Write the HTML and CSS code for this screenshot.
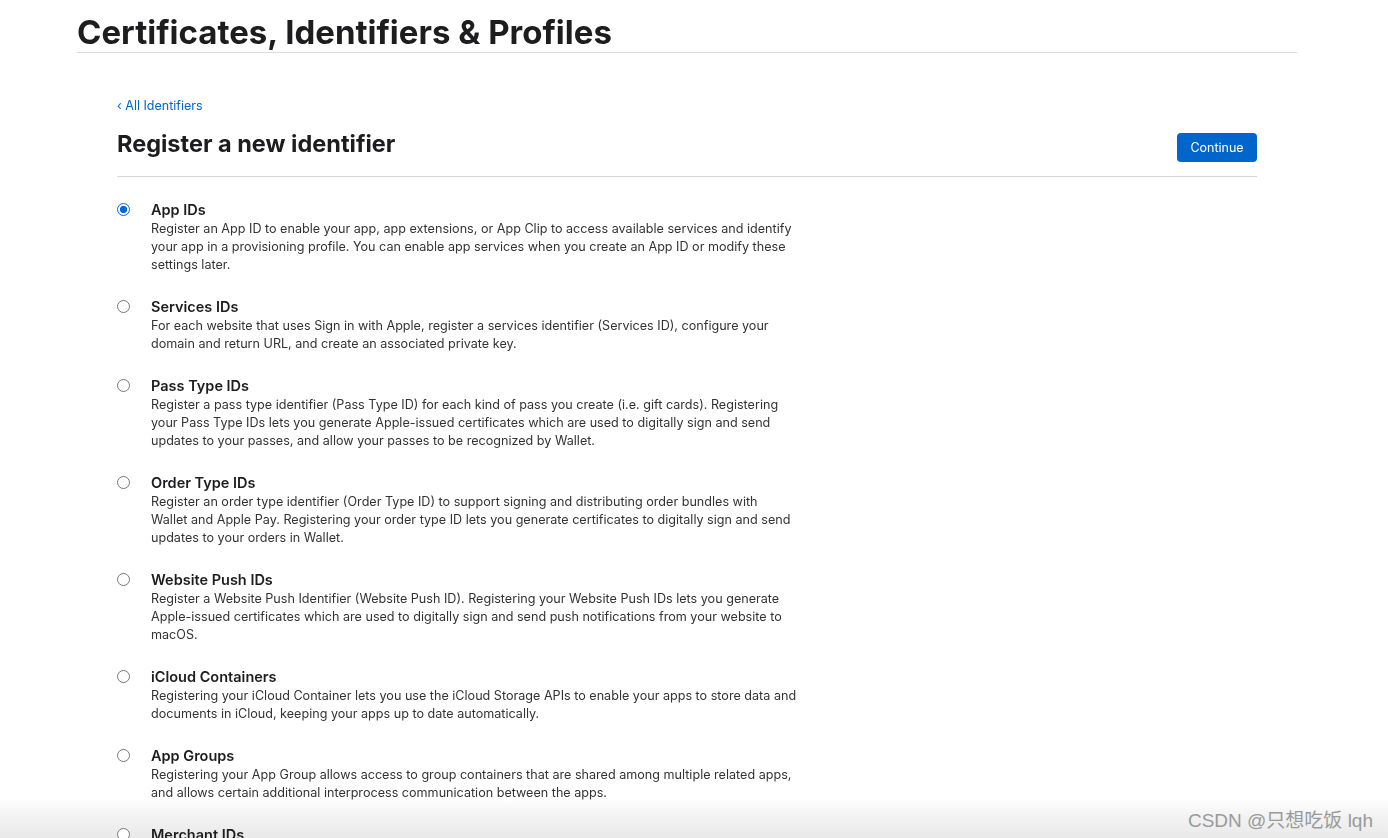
FILE: index.html
```html
<!DOCTYPE html>
<html lang="en">
<head>
    <meta charset="UTF-8">
    <meta name="viewport" content="width=device-width, initial-scale=1.0">
    <title>Register a new identifier</title>
    <link rel="stylesheet" href="styles.css">
</head>
<body>
    <header class="page-header">
        <h1 class="page-title">Certificates, Identifiers &amp; Profiles</h1>
    </header>

    <main class="content">
        <a class="back-link" href="#">&lsaquo; All Identifiers</a>
        <div class="section-head">
            <h2 class="section-title">Register a new identifier</h2>
            <button class="btn-continue">Continue</button>
        </div>

        <ul class="id-list">
            <li class="id-item">
                <span class="radio checked"></span>
                <div class="id-text">
                    <div class="id-name">App IDs</div>
                    <p class="id-desc">Register an App ID to enable your app, app extensions, or App Clip to access available services and identify your app in a provisioning profile. You can enable app services when you create an App ID or modify these settings later.</p>
                </div>
            </li>
            <li class="id-item">
                <span class="radio"></span>
                <div class="id-text">
                    <div class="id-name">Services IDs</div>
                    <p class="id-desc">For each website that uses Sign in with Apple, register a services identifier (Services ID), configure your domain and return URL, and create an associated private key.</p>
                </div>
            </li>
            <li class="id-item">
                <span class="radio"></span>
                <div class="id-text">
                    <div class="id-name">Pass Type IDs</div>
                    <p class="id-desc">Register a pass type identifier (Pass Type ID) for each kind of pass you create (i.e. gift cards). Registering your Pass Type IDs lets you generate Apple-issued certificates which are used to digitally sign and send updates to your passes, and allow your passes to be recognized by Wallet.</p>
                </div>
            </li>
            <li class="id-item">
                <span class="radio"></span>
                <div class="id-text">
                    <div class="id-name">Order Type IDs</div>
                    <p class="id-desc">Register an order type identifier (Order Type ID) to support signing and distributing order bundles with Wallet and Apple Pay. Registering your order type ID lets you generate certificates to digitally sign and send updates to your orders in Wallet.</p>
                </div>
            </li>
            <li class="id-item">
                <span class="radio"></span>
                <div class="id-text">
                    <div class="id-name">Website Push IDs</div>
                    <p class="id-desc">Register a Website Push Identifier (Website Push ID). Registering your Website Push IDs lets you generate Apple-issued certificates which are used to digitally sign and send push notifications from your website to macOS.</p>
                </div>
            </li>
            <li class="id-item">
                <span class="radio"></span>
                <div class="id-text">
                    <div class="id-name">iCloud Containers</div>
                    <p class="id-desc">Registering your iCloud Container lets you use the iCloud Storage APIs to enable your apps to store data and documents in iCloud, keeping your apps up to date automatically.</p>
                </div>
            </li>
            <li class="id-item">
                <span class="radio"></span>
                <div class="id-text">
                    <div class="id-name">App Groups</div>
                    <p class="id-desc">Registering your App Group allows access to group containers that are shared among multiple related apps, and allows certain additional interprocess communication between the apps.</p>
                </div>
            </li>
            <li class="id-item">
                <span class="radio"></span>
                <div class="id-text">
                    <div class="id-name">Merchant IDs</div>
                    <p class="id-desc">Register merchant identifiers to enable your apps to process Apple Pay payments.</p>
                </div>
            </li>
        </ul>
    </main>

    <div class="bottom-shade">
        <span class="watermark">CSDN @只想吃饭 lqh</span>
    </div>
</body>
</html>
```
FILE: styles.css
```css
/* Base */
body {
  margin: 0;
  background: #fff;
  color: #1d1d1f;
  font-family: Inter, "Noto Sans", sans-serif;
  overflow: hidden;
}

/* Page header */
.page-header {
  width: 1220px;
  margin-left: 77px;
  border-bottom: 1px solid #dcdcdc;
}

.page-title {
  margin: 0;
  padding-top: 13px;
  font-size: 33px;
  line-height: 39px;
  font-weight: 700;
  color: #1d1d1f;
}

/* Content */
.content {
  width: 1140px;
  margin-left: 117px;
  padding-top: 45px;
}

.back-link {
  display: block;
  font-size: 12.5px;
  line-height: 16px;
  color: #0066cc;
  text-decoration: none;
}

.section-head {
  display: flex;
  justify-content: space-between;
  align-items: flex-start;
  margin-top: 15px;
  padding-bottom: 14px;
  border-bottom: 1px solid #d6d6d6;
}

.section-title {
  margin: 0;
  font-size: 23.5px;
  line-height: 30px;
  font-weight: 700;
}

.btn-continue {
  width: 80px;
  height: 29px;
  margin-top: 4px;
  border: none;
  border-radius: 4px;
  background: #0066cc;
  color: #fff;
  font-family: inherit;
  font-size: 12.5px;
  cursor: pointer;
}

/* Identifier list */
.id-list {
  list-style: none;
  margin: 0;
  padding: 23px 0 0;
}

.id-item {
  display: flex;
  gap: 21px;
  margin-bottom: 23px;
}

.radio {
  flex: none;
  box-sizing: border-box;
  width: 13px;
  height: 13px;
  margin-top: 3px;
  border: 1px solid #767676;
  border-radius: 50%;
  background: #fff;
}

.radio.checked {
  border: 1.5px solid #0a64e6;
  background: radial-gradient(circle, #0a64e6 0 3.4px, #fff 3.9px);
}

.id-name {
  font-size: 14.5px;
  line-height: 20px;
  font-weight: 600;
  color: #1d1d1f;
}

.id-desc {
  width: 646px;
  margin: 0;
  font-size: 12.6px;
  line-height: 18px;
  color: #333;
}

/* Screenshot bottom shadow + watermark */
.bottom-shade {
  position: fixed;
  z-index: -1;
  left: 0;
  right: 0;
  bottom: 0;
  height: 40px;
  background: linear-gradient(to bottom, #fff 0%, #f3f3f3 45%, #e9e9e9 100%);
}

.watermark {
  position: absolute;
  right: 15px;
  top: 7px;
  font-family: "Liberation Sans", "Noto Sans CJK SC", sans-serif;
  font-size: 19px;
  color: #9a9a9a;
}
```
